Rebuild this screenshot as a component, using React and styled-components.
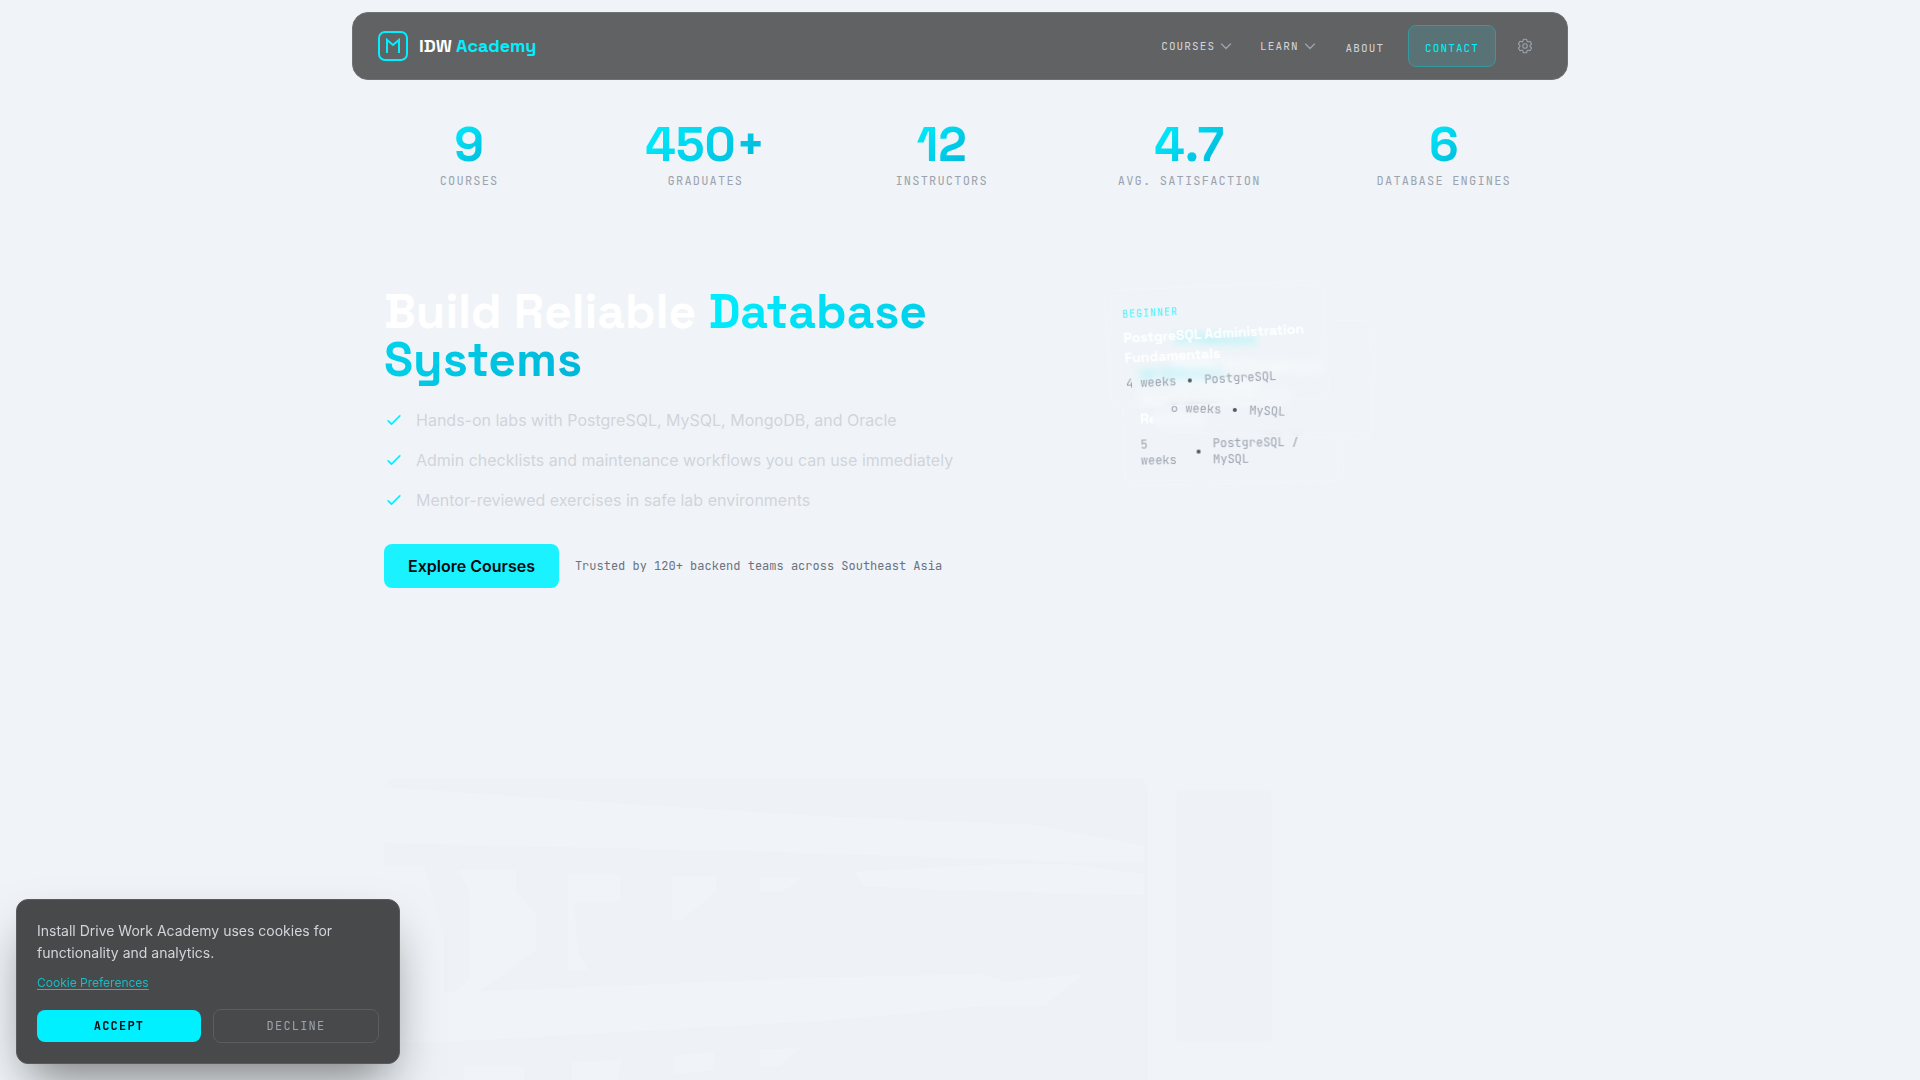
import React from "react";
import styled, { createGlobalStyle } from "styled-components";

const colors = {
    page: "#f0f4f8",
    accent: "#00f0ff",
    gradient: "linear-gradient(135deg, #00f0ff 0%, #00b4d8 100%)",
    muted: "#9ca3af",
    soft: "#d1d5db",
    dim: "#6b7280",
};

const sans = `Inter, "Liberation Sans", sans-serif`;
const mono = `"JetBrains Mono", "DejaVu Sans Mono", monospace`;
const display = `"Space Grotesk", Inter, "Liberation Sans", sans-serif`;

const GlobalStyle = createGlobalStyle`
    *,
    *::before,
    *::after {
        box-sizing: border-box;
    }
    html {
        overflow: hidden;
    }
    body {
        margin: 0;
        min-height: 100vh;
        background: ${colors.page};
        font-family: ${sans};
        color: #fff;
    }
    h1, h3, p, ul, dl, dd {
        margin: 0;
        padding: 0;
    }
    button {
        cursor: pointer;
    }
`;

//#region Header
const Header = styled.header`
    position: sticky;
    top: 0;
    z-index: 10;
    padding: 12px 16px 0;
`;

const NavBar = styled.nav`
    display: flex;
    align-items: center;
    justify-content: space-between;
    max-width: 1216px;
    margin: 0 auto;
    padding: 12px 25px;
    background: #616263;
    border: 1px solid #707172;
    border-radius: 16px;
`;

const Brand = styled.a`
    display: flex;
    align-items: center;
    gap: 11px;
    font-family: ${display};
    font-size: 18px;
    font-weight: 700;
    line-height: 28px;
    color: #fff;
    text-decoration: none;

    em {
        font-style: normal;
        color: ${colors.accent};
    }
`;

const NavList = styled.ul`
    display: flex;
    align-items: center;
    list-style: none;
`;

const navText = `
    font-family: ${mono};
    font-size: 11px;
    line-height: 16px;
    letter-spacing: 0.1em;
    text-transform: uppercase;
`;

const NavButton = styled.button`
    ${navText}
    display: flex;
    align-items: center;
    gap: 5px;
    padding: 8px 14px;
    border: 0;
    background: none;
    color: ${colors.soft};
`;

const NavLink = styled.a`
    ${navText}
    display: block;
    padding: 12px 16px 8px;
    color: ${colors.soft};
    text-decoration: none;
`;

const ContactLink = styled.a`
    ${navText}
    display: block;
    margin: 0 12px 0 8px;
    padding: 14px 16px 10px;
    border: 1px solid #36999f;
    border-radius: 8px;
    background: #587275;
    color: ${colors.accent};
    text-decoration: none;
`;

const IconButton = styled.button`
    display: flex;
    padding: 8px;
    border: 0;
    background: none;
    color: ${colors.muted};
`;
//#endregion Header

//#region Stats
const Stats = styled.dl`
    display: grid;
    grid-template-columns: repeat(5, 1fr);
    gap: 116px;
    max-width: 1144px;
    margin: 22px auto 0;
    padding: 18px 20px;
    border: 1px solid #f1f5f9;
    border-radius: 12px;
`;

const Stat = styled.div`
    display: flex;
    flex-direction: column-reverse;
    align-items: center;
`;

const StatValue = styled.dd`
    font-family: ${display};
    font-size: 48px;
    font-weight: 700;
    line-height: 48px;
    color: transparent;
    background: ${colors.gradient};
    background-clip: text;
`;

const StatLabel = styled.dt`
    margin-top: 4px;
    font-family: ${mono};
    font-size: 12px;
    line-height: 16px;
    letter-spacing: 0.1em;
    text-transform: uppercase;
    white-space: nowrap;
    color: ${colors.muted};
`;
//#endregion Stats

//#region Hero
const Hero = styled.section`
    display: grid;
    grid-template-columns: 3fr 2fr;
    gap: 48px;
    max-width: 1152px;
    margin: 80px auto 0;
`;

const Title = styled.h1`
    max-width: 600px;
    font-family: ${display};
    font-size: 48px;
    font-weight: 700;
    line-height: 48px;
    color: #fff;

    span {
        color: transparent;
        background: ${colors.gradient};
        background-clip: text;
    }
`;

const Points = styled.ul`
    display: grid;
    gap: 16px;
    margin-top: 24px;
    list-style: none;
`;

const Point = styled.li`
    display: flex;
    align-items: center;
    gap: 12px;
    font-size: 16px;
    line-height: 24px;
    color: ${colors.soft};
`;

const Actions = styled.div`
    display: flex;
    align-items: center;
    gap: 16px;
    margin-top: 32px;
`;

const PrimaryLink = styled.a`
    padding: 10px 24px;
    border-radius: 8px;
    background: #1af2ff;
    color: #0a0a0f;
    font-weight: 600;
    font-size: 16px;
    line-height: 24px;
    white-space: nowrap;
    text-decoration: none;
`;

const Trust = styled.p`
    font-family: ${mono};
    font-size: 12px;
    line-height: 16px;
    color: ${colors.dim};
`;

const Deck = styled.div`
    position: relative;
`;

// the cards are fanned out over each other, the last one on top
const Card = styled.article`
    position: absolute;
    left: ${({ $x }) => $x}px;
    top: ${({ $y }) => $y}px;
    width: 220px;
    padding: 16px;
    border: 1px solid #f2f6fa;
    border-radius: 12px;
    transform: rotate(${({ $turn }) => $turn}deg);
    backdrop-filter: blur(4px);
`;

const Level = styled.p`
    font-family: ${mono};
    font-size: 10px;
    line-height: 15px;
    letter-spacing: 0.1em;
    text-transform: uppercase;
    color: ${colors.accent};
    opacity: 0.7;
`;

const CardTitle = styled.h3`
    margin: 6px 0 8px;
    font-family: ${display};
    font-size: 14px;
    font-weight: 700;
    line-height: 20px;
    color: #fff;
`;

const Meta = styled.div`
    display: flex;
    align-items: center;
    gap: 12px;
    font-family: ${mono};
    font-size: 12px;
    line-height: 16px;
    color: ${colors.muted};
`;

const Dot = styled.i`
    flex: none;
    width: 4px;
    height: 4px;
    border-radius: 50%;
    background: #4b5563;
`;
//#endregion Hero

//#region Showcase
const Showcase = styled.section`
    display: grid;
    grid-template-columns: 764px 96px;
    gap: 28px;
    max-width: 1152px;
    margin: 190px auto 0;
`;

const Photo = styled.svg`
    width: 100%;
    height: 320px;
`;

const SidePanel = styled.div`
    height: 252px;
    margin-top: 12px;
    border-radius: 8px;
    background: #eef2f7;
`;
//#endregion Showcase

//#region Cookies
const CookieBox = styled.aside`
    position: fixed;
    left: 16px;
    bottom: 16px;
    z-index: 20;
    width: 384px;
    padding: 20px;
    border: 1px solid #5a5b5c;
    border-radius: 12px;
    background: #48494a;
    box-shadow: 0 25px 50px -12px rgba(0, 0, 0, 0.5);
`;

const CookieText = styled.p`
    font-size: 14px;
    line-height: 22px;
    color: ${colors.soft};
`;

const CookieLink = styled.a`
    display: block;
    width: fit-content;
    margin: 11px 0 18px;
    font-size: 12px;
    line-height: 16px;
    color: #17bcc6;
    text-underline-offset: 2px;
`;

const CookieActions = styled.div`
    display: flex;
    align-items: center;
    gap: 12px;
`;

const CookieButton = styled.button`
    flex: 1 1 0;
    padding: 8px 16px;
    border: ${({ $primary }) => ($primary ? "0" : "1px solid #5c5d5f")};
    border-radius: 8px;
    background: ${({ $primary }) => ($primary ? colors.accent : "none")};
    color: ${({ $primary }) => ($primary ? "#0a0a0f" : colors.muted)};
    font-family: ${mono};
    font-size: 12px;
    font-weight: ${({ $primary }) => ($primary ? 700 : 400)};
    line-height: 16px;
    letter-spacing: 0.1em;
    text-transform: uppercase;
`;
//#endregion Cookies

const Logo = () => (
    <svg width="30" height="30" viewBox="0 0 30 30" fill="none" stroke={colors.accent} strokeWidth="2">
        <rect x="1" y="1" width="28" height="28" rx="6" />
        <path d="M9 22V9l6 5 6-5v13" />
    </svg>
);

const Chevron = () => (
    <svg width="12" height="12" viewBox="0 0 12 12" fill="none" stroke={colors.muted} strokeWidth="1.25" strokeLinecap="round">
        <path d="M1.5 4L6 8.5 10.5 4" />
    </svg>
);

const Check = () => (
    <svg width="20" height="20" viewBox="0 0 24 24" fill="none" stroke={colors.accent} strokeWidth="2" strokeLinecap="round" strokeLinejoin="round">
        <path d="M5 13l4 4L19 7" />
    </svg>
);

const Gear = () => (
    <svg width="18" height="18" viewBox="0 0 24 24" fill="none" stroke="currentColor" strokeWidth="1.5" strokeLinecap="round" strokeLinejoin="round">
        <path d="M9.594 3.94c.09-.542.56-.94 1.11-.94h2.593c.55 0 1.02.398 1.11.94l.213 1.281c.063.374.313.686.645.87.074.04.147.083.22.127.325.196.72.257 1.075.124l1.217-.456a1.125 1.125 0 0 1 1.37.49l1.296 2.247a1.125 1.125 0 0 1-.26 1.431l-1.003.827c-.293.241-.438.613-.43.992a7.723 7.723 0 0 1 0 .255c-.008.378.137.75.43.991l1.004.827c.424.35.534.955.26 1.43l-1.298 2.247a1.125 1.125 0 0 1-1.369.491l-1.217-.456c-.355-.133-.75-.072-1.076.124a6.47 6.47 0 0 1-.22.128c-.331.183-.581.495-.644.869l-.213 1.281c-.09.543-.56.94-1.11.94h-2.594c-.55 0-1.019-.398-1.11-.94l-.213-1.281c-.062-.374-.312-.686-.644-.87a6.52 6.52 0 0 1-.22-.127c-.325-.196-.72-.257-1.076-.124l-1.217.456a1.125 1.125 0 0 1-1.369-.49l-1.297-2.247a1.125 1.125 0 0 1 .26-1.431l1.004-.827c.292-.24.437-.613.43-.991a6.932 6.932 0 0 1 0-.255c.007-.38-.138-.751-.43-.992l-1.004-.827a1.125 1.125 0 0 1-.26-1.43l1.297-2.247a1.125 1.125 0 0 1 1.37-.491l1.216.456c.356.133.751.072 1.076-.124.072-.044.146-.086.22-.128.332-.183.582-.495.644-.869l.214-1.28Z" />
        <circle cx="12" cy="12" r="3" />
    </svg>
);

const ServerRoom = () => (
    <Photo viewBox="0 0 764 320" preserveAspectRatio="none" aria-hidden="true">
        <rect width="764" height="340" rx="12" fill="#eef2f7" />
        <g fill={colors.page}>
            <path d="M0 9L210 24 450 39 650 47 760 68V84L700 84 400 74 0 65z" />
            <path d="M470 94L620 86 680 86 760 96V117L560 112 480 108z" />
            <path d="M74 92h58v22l20 22v36l-46 34-46 24V224l26-24V116z" />
            <path d="M184 96h52v28h-46l4 50 10 18h-20z" />
            <path d="M288 98h44v16l-34 28h-10z" />
            <path d="M376 100h42l-20 14h-22z" />
            <path d="M60 215L430 200 600 196 620 204 700 196 660 228 600 228 450 242 60 264 0 264V88h40l20 70z" />
            <path d="M80 288h60v32H80zM188 284l50-2-10 38h-40zM290 278l40-4v18l-40 4zM376 272l40-2-20 18h-20z" />
        </g>
    </Photo>
);

const stats = [
    ["9", "Courses"],
    ["450+", "Graduates"],
    ["12", "Instructors"],
    ["4.7", "Avg. Satisfaction"],
    ["6", "Database Engines"],
];

const points = [
    "Hands-on labs with PostgreSQL, MySQL, MongoDB, and Oracle",
    "Admin checklists and maintenance workflows you can use immediately",
    "Mentor-reviewed exercises in safe lab environments",
];

const cards = [
    { x: 29, y: 61, turn: -1, level: "Intermediate", title: "Database Backup and Recovery", weeks: "5 weeks", engine: "PostgreSQL / MySQL" },
    { x: 61, y: 29, turn: 2, level: "Intermediate", title: "MySQL Performance & Optimization", weeks: "6 weeks", engine: "MySQL" },
    { x: 13, y: -3, turn: -3, level: "Beginner", title: "PostgreSQL Administration Fundamentals", weeks: "4 weeks", engine: "PostgreSQL" },
];

const CourseCard = ({ card }) => (
    <Card $x={card.x} $y={card.y} $turn={card.turn}>
        <Level>{card.level}</Level>
        <CardTitle>{card.title}</CardTitle>
        <Meta>
            <span>{card.weeks}</span>
            <Dot />
            <span>{card.engine}</span>
        </Meta>
    </Card>
);

const App = () => (
    <>
        <GlobalStyle />
        <Header>
            <NavBar>
                <Brand href="#">
                    <Logo />
                    <span>
                        IDW <em>Academy</em>
                    </span>
                </Brand>
                <NavList>
                    <li><NavButton>Courses <Chevron /></NavButton></li>
                    <li><NavButton>Learn <Chevron /></NavButton></li>
                    <li><NavLink href="#about">About</NavLink></li>
                    <li><ContactLink href="#contact">Contact</ContactLink></li>
                    <li><IconButton aria-label="Settings"><Gear /></IconButton></li>
                </NavList>
            </NavBar>
        </Header>
        <main>
            <Stats>
                {stats.map(([value, label]) => (
                    <Stat key={label}>
                        <StatLabel>{label}</StatLabel>
                        <StatValue>{value}</StatValue>
                    </Stat>
                ))}
            </Stats>
            <Hero>
                <div>
                    <Title>
                        Build Reliable <span>Database Systems</span>
                    </Title>
                    <Points>
                        {points.map((text) => (
                            <Point key={text}>
                                <Check />
                                {text}
                            </Point>
                        ))}
                    </Points>
                    <Actions>
                        <PrimaryLink href="#courses">Explore Courses</PrimaryLink>
                        <Trust>Trusted by 120+ backend teams across Southeast Asia</Trust>
                    </Actions>
                </div>
                <Deck>
                    {cards.map((card) => (
                        <CourseCard key={card.title} card={card} />
                    ))}
                </Deck>
            </Hero>
            <Showcase>
                <ServerRoom />
                <SidePanel />
            </Showcase>
        </main>
        <CookieBox aria-label="Cookie notice">
            <CookieText>
                Install Drive Work Academy uses cookies for functionality and analytics.
            </CookieText>
            <CookieLink href="#cookies">Cookie Preferences</CookieLink>
            <CookieActions>
                <CookieButton $primary>Accept</CookieButton>
                <CookieButton>Decline</CookieButton>
            </CookieActions>
        </CookieBox>
    </>
);

export default App;
